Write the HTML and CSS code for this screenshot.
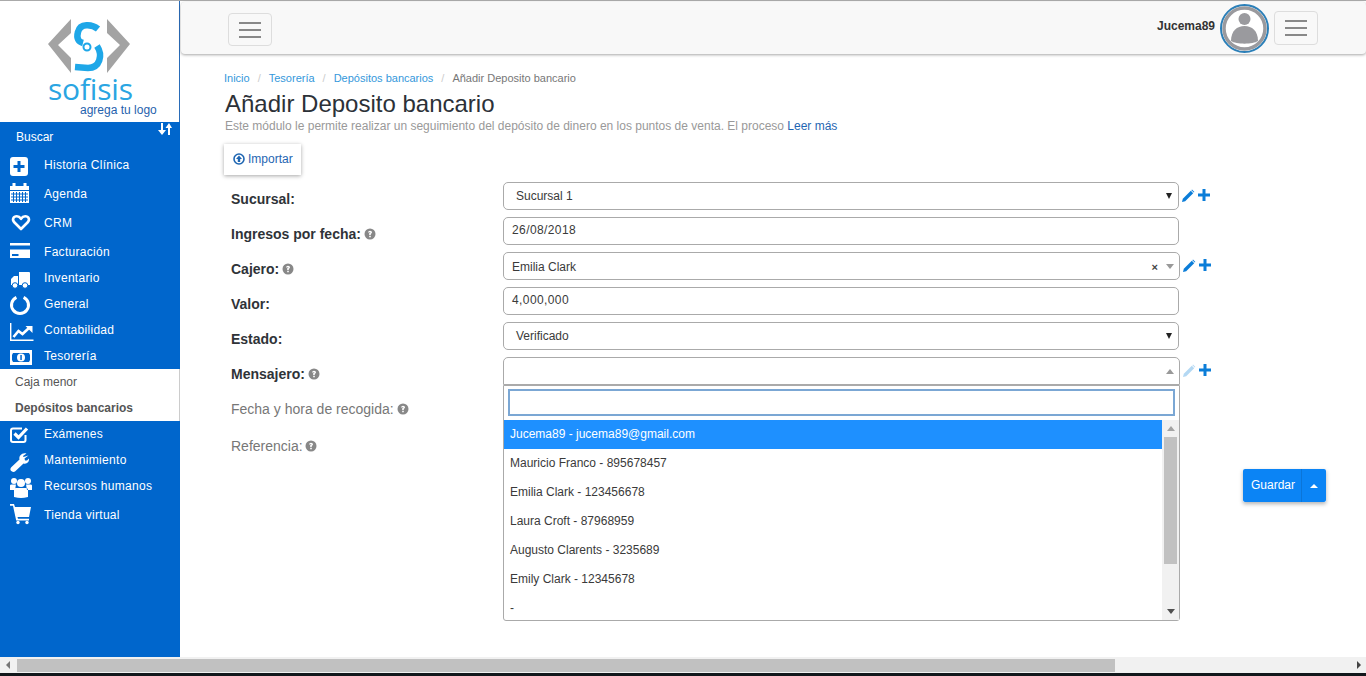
FILE: index.html
```html
<!DOCTYPE html>
<html lang="es">
<head>
    <meta charset="UTF-8">
    <meta name="viewport" content="width=device-width, initial-scale=1.0">
    <title>Añadir Deposito bancario</title>
    <link rel="stylesheet" href="styles.css">
</head>
<body>
    <div class="app">
        <aside class="sidebar">
            <div class="logo">
                <svg class="logo-mark" width="179" height="84" viewBox="0 0 179 84">
                    <path fill="#a3a3a3" d="M71 19L48 44L71 73V58L58 45L71 33Z"/>
                    <path fill="#a3a3a3" d="M107 19L130 44L107 73V58L120 45L107 33Z"/>
                    <path fill="none" stroke="#1ea7e8" stroke-width="6.500" d="M98 29C92 24 80 23 78 32C76 39 79 42 83 43"/>
                    <path fill="none" stroke="#1ea7e8" stroke-width="6.500" d="M97 46C103 55 100 68 88 68L75 67"/>
                    <circle cx="87" cy="47" r="3.500" fill="none" stroke="#1ea7e8" stroke-width="2"/>
                </svg>
                <span class="logo-name">sofisis</span>
                <span class="logo-hint">agrega tu logo</span>
            </div>
            <div class="search-row">
                <span>Buscar</span>
                <svg class="sort-icon" width="14" height="14" viewBox="0 0 14 14">
                    <path fill="#fff" d="M3 1H5V8H8L4 13L0 8H3Z"/>
                    <path fill="#fff" d="M10 13H12V6H14L11 1L7.500 6H10Z"/>
                </svg>
            </div>
            <nav class="nav">
                <a class="nav-item">
                    <svg class="nav-icon" viewBox="0 0 24 26"><rect y="5" width="18" height="19" rx="3" fill="#fff"/><path d="M9 9V20M3.500 14.500H14.500" stroke="#0066cc" stroke-width="3"/></svg>
                    Historia Clínica
                </a>
                <a class="nav-item spaced">
                    <svg class="nav-icon" viewBox="0 0 24 26"><path fill="#fff" d="M0 5H2.500V2H5.500V5H13.500V2H16.500V5H19V9H0ZM0 10H19V22H0Z"/><path stroke="#0066cc" d="M1 13H18M1 16H18M1 19H18M3.500 11V21M6.500 11V21M9.500 11V21M12.500 11V21M15.500 11V21" stroke-width="1"/></svg>
                    Agenda
                </a>
                <a class="nav-item spaced">
                    <svg class="nav-icon" viewBox="0 0 24 26"><path fill="none" stroke="#fff" stroke-width="2.600" stroke-linejoin="round" d="M11 19L4.500 12.500C1.500 9.500 3.500 6.300 6.800 6.300C8.700 6.300 10 7.300 11 8.800C12 7.300 13.300 6.300 15.200 6.300C18.500 6.300 20.500 9.500 17.500 12.500Z"/></svg>
                    CRM
                </a>
                <a class="nav-item spaced">
                    <svg class="nav-icon" viewBox="0 0 24 26"><path fill="#fff" d="M0 4H20V6.500H0ZM0 10.500H20V19H0Z"/><rect x="2" y="15" width="6.500" height="2" fill="#0066cc"/></svg>
                    Facturación
                </a>
                <a class="nav-item">
                    <svg class="nav-icon" viewBox="0 0 24 26"><path fill="#fff" d="M9 7H19Q20 7 20 8V20H9ZM2 13L4 11H8V20H1V14Z"/><circle cx="5" cy="20.500" r="2.800" fill="#fff" stroke="#0066cc"/><circle cx="15" cy="20.500" r="2.800" fill="#fff" stroke="#0066cc"/></svg>
                    Inventario
                </a>
                <a class="nav-item">
                    <svg class="nav-icon" viewBox="0 0 24 26"><path fill="none" stroke="#fff" stroke-width="3" d="M13.600 6.300A8.500 8.500 0 1 1 6.400 6.300"/></svg>
                    General
                </a>
                <a class="nav-item">
                    <svg class="nav-icon" viewBox="0 0 24 26"><path fill="none" stroke="#fff" stroke-width="1.400" d="M.7 6V23.300H23.500"/><path fill="none" stroke="#fff" stroke-width="2.600" d="M3.500 20L8.500 14L12.500 17L19 11"/><path fill="#fff" d="M15.500 9H22.500V16Z"/></svg>
                    Contabilidad
                </a>
                <a class="nav-item">
                    <svg class="nav-icon" viewBox="0 0 24 26"><rect y="7" width="22" height="15" fill="#fff"/><path fill="#0066cc" d="M3 10H19L20 12V17L19 19H3L2 17V12Z"/><circle cx="11" cy="14.500" r="4" fill="#fff"/><rect x="10.300" y="12" width="1.500" height="5" fill="#0066cc"/></svg>
                    Tesorería
                </a>
                <div class="subnav">
                    <a class="sub-item">Caja menor</a>
                    <a class="sub-item current">Depósitos bancarios</a>
                </div>
                <a class="nav-item">
                    <svg class="nav-icon" viewBox="0 0 24 26"><path fill="none" stroke="#fff" stroke-width="2" d="M15.500 14V19Q15.500 21 13.500 21H3Q1 21 1 19V9.500Q1 7.500 3 7.500H12"/><path fill="none" stroke="#fff" stroke-width="3.200" d="M4.500 12.500L8.500 16.500L17 7.500"/></svg>
                    Exámenes
                </a>
                <a class="nav-item">
                    <svg class="nav-icon" viewBox="0 0 24 26"><path fill="#fff" d="M18.500 8.500L14.500 11.500L15 13.500H17L19 11.500C19.500 15 16.500 17.500 13.500 16.500L5 24.500C3.500 25.500 1 24.500 .5 23C0 21.500 1 20.500 1.500 20L9.500 12.500C8.500 8.500 12.500 5 16.500 6.500L13 9L13.500 10Z"/></svg>
                    Mantenimiento
                </a>
                <a class="nav-item">
                    <svg class="nav-icon" viewBox="0 0 24 26"><circle cx="4" cy="8" r="3" fill="#fff"/><circle cx="18" cy="8" r="3" fill="#fff"/><circle cx="11" cy="10" r="4" fill="#fff"/><path fill="#fff" d="M0 12.500Q0 11.500 1.500 11.500H6L5 17H0ZM22 12.500Q22 11.500 20.500 11.500H16L17 17H22ZM6 15H16Q18 15 18 17V24Q14 25 11 25Q8 25 4 24V17Q4 15 6 15Z"/></svg>
                    Recursos humanos
                </a>
                <a class="nav-item spaced">
                    <svg class="nav-icon" viewBox="0 0 24 26"><path fill="#fff" d="M0 2H4L5 5H21L19 15H7.500L8 16.800H19V18.500H6.200L3 3.800H0Z"/><circle cx="8" cy="20.500" r="1.700" fill="#fff"/><circle cx="17" cy="20.500" r="1.700" fill="#fff"/></svg>
                    Tienda virtual
                </a>
            </nav>
        </aside>

        <main class="main">
            <header class="topbar">
                <button class="menu-btn left-btn" type="button"><span></span><span></span><span></span></button>
                <div class="user-box">
                    <span class="user-name">Jucema89</span>
                    <svg class="avatar" width="49" height="49" viewBox="0 0 49 49">
                        <circle cx="24.500" cy="24.500" r="23.500" fill="#fff" stroke="#2b7fb8" stroke-width="2"/>
                        <circle cx="24.500" cy="24.500" r="20.500" fill="#fff" stroke="#9a9a9e" stroke-width="3.500"/>
                        <circle cx="24.500" cy="15" r="6" fill="#9a9a9e"/>
                        <path fill="#9a9a9e" d="M11 37C11 27 17 22 24.500 22C32 22 38 27 38 37C33 40.500 16 40.500 11 37Z"/>
                    </svg>
                    <button class="menu-btn" type="button"><span></span><span></span><span></span></button>
                </div>
            </header>

            <div class="content">
                <div class="breadcrumb">
                    <a>Inicio</a><i>/</i><a>Tesorería</a><i>/</i><a>Depósitos bancarios</a><i>/</i><span>Añadir Deposito bancario</span>
                </div>
                <h1 class="page-title">Añadir Deposito bancario</h1>
                <p class="page-desc">Este módulo le permite realizar un seguimiento del depósito de dinero en los puntos de venta. El proceso <a>Leer más</a></p>
                <button class="import-btn" type="button">
                    <svg width="12" height="12" viewBox="0 0 12 12"><circle cx="6" cy="6" r="5" fill="none" stroke="#1f66b2" stroke-width="1.600"/><path fill="#1f66b2" d="M6 2.500L9 6H7.200V9H4.800V6H3Z"/></svg>
                    Importar
                </button>

                <form class="form">
                    <div class="row">
                        <label class="label">Sucursal:</label>
                        <div class="field select-field pad-wide">Sucursal 1<b class="arrow-down"></b></div>
                        <div class="actions">
                            <svg class="pencil" viewBox="0 0 13 13"><path d="M0 13L.8 9.800L8.800 1.800L11.200 4.200L3.200 12.200Z"/><path d="M10 .6L12.400 3L11.800 3.600L9.400 1.200Z"/></svg>
                            <svg class="plus" viewBox="0 0 12 12"><path d="M4.500 0H7.500V4.500H12V7.500H7.500V12H4.500V7.500H0V4.500H4.500Z"/></svg>
                        </div>
                    </div>
                    <div class="row">
                        <label class="label">Ingresos por fecha: <svg class="help" viewBox="0 0 12 12"><circle cx="6" cy="6" r="5.500"/><path d="M4 4.500Q4.200 2.700 6 2.700Q8 2.700 8 4.300Q8 5.300 6.800 5.800V7H5.200V5.200Q6.500 4.800 6.400 4.200Q6 3.600 5.300 4.600ZM5.200 7.800H6.800V9.300H5.200Z" fill="#fff"/></svg></label>
                        <div class="field num">26/08/2018</div>
                    </div>
                    <div class="row">
                        <label class="label">Cajero: <svg class="help" viewBox="0 0 12 12"><circle cx="6" cy="6" r="5.500"/><path d="M4 4.500Q4.200 2.700 6 2.700Q8 2.700 8 4.300Q8 5.300 6.800 5.800V7H5.200V5.200Q6.500 4.800 6.400 4.200Q6 3.600 5.300 4.600ZM5.200 7.800H6.800V9.300H5.200Z" fill="#fff"/></svg></label>
                        <div class="field select2-field">Emilia Clark<span class="clear">×</span><b class="arrow-down soft"></b></div>
                        <div class="actions">
                            <svg class="pencil" viewBox="0 0 13 13"><path d="M0 13L.8 9.800L8.800 1.800L11.200 4.200L3.200 12.200Z"/><path d="M10 .6L12.400 3L11.800 3.600L9.400 1.200Z"/></svg>
                            <svg class="plus" viewBox="0 0 12 12"><path d="M4.500 0H7.500V4.500H12V7.500H7.500V12H4.500V7.500H0V4.500H4.500Z"/></svg>
                        </div>
                    </div>
                    <div class="row">
                        <label class="label">Valor:</label>
                        <div class="field num">4,000,000</div>
                    </div>
                    <div class="row">
                        <label class="label">Estado:</label>
                        <div class="field select-field pad-wide">Verificado<b class="arrow-down"></b></div>
                    </div>
                    <div class="row">
                        <label class="label">Mensajero: <svg class="help" viewBox="0 0 12 12"><circle cx="6" cy="6" r="5.500"/><path d="M4 4.500Q4.200 2.700 6 2.700Q8 2.700 8 4.300Q8 5.300 6.800 5.800V7H5.200V5.200Q6.500 4.800 6.400 4.200Q6 3.600 5.300 4.600ZM5.200 7.800H6.800V9.300H5.200Z" fill="#fff"/></svg></label>
                        <div class="field select2-field open">
                            <b class="arrow-up"></b>
                            <div class="dropdown">
                                <div class="dropdown-search"></div>
                                <div class="dropdown-body">
                                    <ul class="options">
                                        <li class="active">Jucema89 - jucema89@gmail.com</li>
                                        <li>Mauricio Franco - 895678457</li>
                                        <li>Emilia Clark - 123456678</li>
                                        <li>Laura Croft - 87968959</li>
                                        <li>Augusto Clarents - 3235689</li>
                                        <li>Emily Clark - 12345678</li>
                                        <li>-</li>
                                    </ul>
                                    <div class="v-scroll">
                                        <b class="scroll-up"></b>
                                        <div class="v-thumb"></div>
                                        <b class="scroll-down"></b>
                                    </div>
                                </div>
                            </div>
                        </div>
                        <div class="actions">
                            <svg class="pencil faded" viewBox="0 0 13 13"><path d="M0 13L.8 9.800L8.800 1.800L11.200 4.200L3.200 12.200Z"/><path d="M10 .6L12.400 3L11.800 3.600L9.400 1.200Z"/></svg>
                            <svg class="plus" viewBox="0 0 12 12"><path d="M4.500 0H7.500V4.500H12V7.500H7.500V12H4.500V7.500H0V4.500H4.500Z"/></svg>
                        </div>
                    </div>
                    <div class="row">
                        <label class="label light">Fecha y hora de recogida: <svg class="help" viewBox="0 0 12 12"><circle cx="6" cy="6" r="5.500"/><path d="M4 4.500Q4.200 2.700 6 2.700Q8 2.700 8 4.300Q8 5.300 6.800 5.800V7H5.200V5.200Q6.500 4.800 6.400 4.200Q6 3.600 5.300 4.600ZM5.200 7.800H6.800V9.300H5.200Z" fill="#fff"/></svg></label>
                    </div>
                    <div class="row last">
                        <label class="label light">Referencia: <svg class="help" viewBox="0 0 12 12"><circle cx="6" cy="6" r="5.500"/><path d="M4 4.500Q4.200 2.700 6 2.700Q8 2.700 8 4.300Q8 5.300 6.800 5.800V7H5.200V5.200Q6.500 4.800 6.400 4.200Q6 3.600 5.300 4.600ZM5.200 7.800H6.800V9.300H5.200Z" fill="#fff"/></svg></label>
                    </div>
                </form>
            </div>

            <div class="save-group">
                <button class="save-btn" type="button">Guardar</button>
                <button class="save-toggle" type="button"><b></b></button>
            </div>
        </main>
    </div>

    <div class="h-scroll">
        <b class="scroll-left"></b>
        <div class="h-thumb"></div>
        <b class="scroll-right"></b>
    </div>
    <div class="bottom-strip"></div>
</body>
</html>
```

FILE: styles.css
```css
* {
    box-sizing: border-box;
}

html, body {
    height: 100%;
}

body {
    margin: 0;
    height: 676px;
    overflow: hidden;
    display: flex;
    flex-direction: column;
    background-color: #fff;
    font-family: "Liberation Sans", Arial, sans-serif;
    font-size: 12px;
    color: #333;
}

.app {
    flex: 1;
    display: flex;
    min-height: 0;
    border-top: 1px solid #aaa;
}

/* sidebar */
.sidebar {
    width: 180px;
    flex-shrink: 0;
    background-color: #0066cc;
    color: #fff;
}

.logo {
    position: relative;
    height: 121px;
    background-color: #fff;
    border-right: 1px solid #2a6cb8;
    overflow: hidden;
}

.logo-mark {
    display: block;
    position: absolute;
    top: -1px;
    left: 0;
}

.logo-name {
    position: absolute;
    left: 48px;
    top: 73px;
    font-family: "Open Sans", sans-serif;
    font-size: 30px;
    line-height: 30px;
    letter-spacing: -.2px;
    color: #2aa5e2;
}

.logo-hint {
    position: absolute;
    left: 80px;
    top: 102px;
    font-size: 12px;
    line-height: 14px;
    color: #1f62ad;
}

.search-row {
    position: relative;
    height: 30px;
    padding: 8px 0 0 16px;
    line-height: 14px;
}

.sort-icon {
    position: absolute;
    top: 0;
    left: 158px;
}

.nav-item {
    display: flex;
    align-items: center;
    height: 26px;
    padding-left: 10px;
    letter-spacing: .3px;
    color: #fff;
}

.nav-item.spaced {
    margin-top: 3px;
}

.nav-icon {
    width: 24px;
    height: 26px;
    margin-right: 10px;
    flex-shrink: 0;
    overflow: visible;
}

.subnav {
    background-color: #fff;
    border-right: 1px solid #ccc;
}

.sub-item {
    display: block;
    height: 26px;
    padding-left: 15px;
    line-height: 26px;
    color: #555;
}

.sub-item.current {
    font-weight: bold;
}

/* top bar */
.main {
    position: relative;
    flex: 1;
    min-width: 0;
}

.topbar {
    display: flex;
    justify-content: space-between;
    align-items: flex-start;
    height: 52px;
    margin: 1px 0 0 1px;
    padding: 9px 48px 0 47px;
    background-color: #f8f8f8;
    border-radius: 4px;
    box-shadow: 0 1px 3px rgba(0, 0, 0, .35);
}

.menu-btn {
    display: flex;
    flex-direction: column;
    justify-content: center;
    align-items: center;
    gap: 5px;
    width: 44px;
    height: 34px;
    padding: 0;
    background-color: #f8f8f8;
    border: 1px solid #ddd;
    border-radius: 4px;
}

.menu-btn span {
    display: block;
    width: 22px;
    height: 2px;
    background-color: #888;
}

.left-btn {
    margin-top: 2px;
    height: 33px;
}

.user-box {
    display: flex;
    align-items: center;
    margin-top: -7px;
}

.user-name {
    margin: -6px 5px 0 0;
    font-weight: bold;
}

.avatar {
    margin-right: 5px;
}

.user-box .menu-btn {
    margin-top: -1px;
}

/* page head */
.content {
    padding: 17px 0 0 44px;
}

.breadcrumb {
    height: 14px;
    font-size: 11px;
    line-height: 14px;
    color: #777;
}

.breadcrumb a {
    color: #3498db;
}

.breadcrumb i {
    padding: 0 8px;
    font-style: normal;
    color: #ccc;
}

.page-title {
    margin: 6px 0 0 1px;
    font-size: 24px;
    font-weight: normal;
    line-height: 26px;
    color: #2c3138;
}

.page-desc {
    margin: 2px 0 0 1px;
    line-height: 14px;
    color: #999;
}

.page-desc a {
    color: #1f66b2;
}

.import-btn {
    display: flex;
    align-items: center;
    gap: 3px;
    width: 77px;
    height: 31px;
    margin-top: 11px;
    padding: 0 0 2px 9px;
    background-color: #fff;
    border: none;
    box-shadow: 0 1px 4px rgba(0, 0, 0, .35);
    font: inherit;
    color: #1f66b2;
}

/* form */
.form {
    display: flex;
    flex-direction: column;
    gap: 7px;
    margin: 7px 0 0 7px;
}

.row {
    display: flex;
    height: 28px;
}

.row.last {
    margin-top: 2px;
}

.label {
    width: 272px;
    flex-shrink: 0;
    padding-top: 9px;
    font-size: 14px;
    font-weight: bold;
    line-height: 16px;
    color: #2f3338;
}

.label.light {
    font-weight: normal;
    color: #777;
}

.help {
    width: 12px;
    height: 12px;
    margin-left: -1px;
    vertical-align: -1px;
    fill: #888;
}

.field {
    position: relative;
    width: 676px;
    height: 28px;
    padding-left: 8px;
    background-color: #fff;
    border: 1px solid #aaa;
    border-radius: 5px;
    line-height: 25px;
    color: #3a3a3a;
}

.field.num {
    letter-spacing: .4px;
}

.field.pad-wide {
    padding: 1px 0 0 12px;
}

.select2-field {
    width: 677px;
    padding-top: 2px;
}

.select2-field.open {
    border-radius: 5px 5px 0 0;
}

.arrow-down,
.arrow-up {
    position: absolute;
    right: 6px;
    top: 10px;
    border-left: 3.5px solid transparent;
    border-right: 3.5px solid transparent;
}

.arrow-down {
    border-top: 6px solid #222;
}

.arrow-down.soft {
    right: 5px;
    top: 11px;
    border-left-width: 4px;
    border-right-width: 4px;
    border-top: 5px solid #999;
}

.arrow-up {
    right: 5px;
    top: 11px;
    border-left-width: 4px;
    border-right-width: 4px;
    border-bottom: 5px solid #999;
}

.clear {
    position: absolute;
    right: 21px;
    top: 2px;
    font-size: 11px;
    font-weight: bold;
    color: #444;
}

.actions {
    display: flex;
    gap: 3px;
    height: 20px;
    padding: 7px 0 0 3px;
}

.pencil {
    width: 13px;
    height: 13px;
    fill: #0b7dd8;
}

.pencil.faded {
    fill: #b4d8f3;
}

.plus {
    width: 12px;
    height: 12px;
    fill: #0b7dd8;
}

/* open select list */
.dropdown {
    position: absolute;
    top: 27px;
    left: -1px;
    z-index: 5;
    width: 677px;
    height: 236px;
    padding-top: 3px;
    background-color: #fff;
    border: 1px solid #aaa;
    border-radius: 0 0 3px 3px;
}

.dropdown-search {
    height: 27px;
    margin: 0 4px;
    background-color: #fff;
    border: 2px solid #7ba7d4;
}

.dropdown-body {
    display: flex;
    height: 200px;
    margin-top: 4px;
}

.options {
    flex: 1;
    margin: 0;
    padding: 0;
    overflow: hidden;
    list-style: none;
}

.options li {
    height: 29px;
    padding-left: 6px;
    line-height: 28px;
    color: #3a3a3a;
}

.options li.active {
    background-color: #1e90ff;
    color: #fff;
}

.v-scroll {
    display: flex;
    flex-direction: column;
    align-items: center;
    width: 17px;
    background-color: #f1f1f1;
}

.v-thumb {
    width: 13px;
    height: 127px;
    margin-top: 6px;
    background-color: #c1c1c1;
}

.scroll-up {
    margin-top: 6px;
    border-left: 4px solid transparent;
    border-right: 4px solid transparent;
    border-bottom: 5px solid #a3a3a3;
}

.scroll-down {
    margin-top: auto;
    margin-bottom: 6px;
    border-left: 4px solid transparent;
    border-right: 4px solid transparent;
    border-top: 5px solid #505050;
}

/* save button */
.save-group {
    position: absolute;
    top: 468px;
    right: 40px;
    display: flex;
    height: 33px;
    box-shadow: 0 2px 4px rgba(0, 0, 0, .3);
}

.save-group button {
    border: none;
    background-color: #0b84f5;
    color: #fff;
    font: inherit;
}

.save-btn {
    width: 58px;
    padding: 0 0 2px 2px;
    border-radius: 2px 0 0 2px;
}

.save-group .save-toggle {
    display: flex;
    justify-content: center;
    align-items: center;
    width: 25px;
    padding: 0;
    border-left: 1px solid #0b75d8;
    border-radius: 0 2px 2px 0;
}

.save-toggle b {
    border-left: 4px solid transparent;
    border-right: 4px solid transparent;
    border-bottom: 4px solid #fff;
}

/* page scrollbar */
.h-scroll {
    display: flex;
    align-items: center;
    height: 16px;
    flex-shrink: 0;
    background-color: #f1f1f1;
}

.h-thumb {
    width: 1098px;
    height: 13px;
    margin-left: 7px;
    background-color: #c1c1c1;
}

.scroll-left {
    margin-left: 6px;
    border-top: 4px solid transparent;
    border-bottom: 4px solid transparent;
    border-right: 4px solid #777;
}

.scroll-right {
    margin-left: auto;
    margin-right: 5px;
    border-top: 4px solid transparent;
    border-bottom: 4px solid transparent;
    border-left: 4px solid #444;
}

.bottom-strip {
    height: 3px;
    flex-shrink: 0;
    background-color: #12171b;
}
```
